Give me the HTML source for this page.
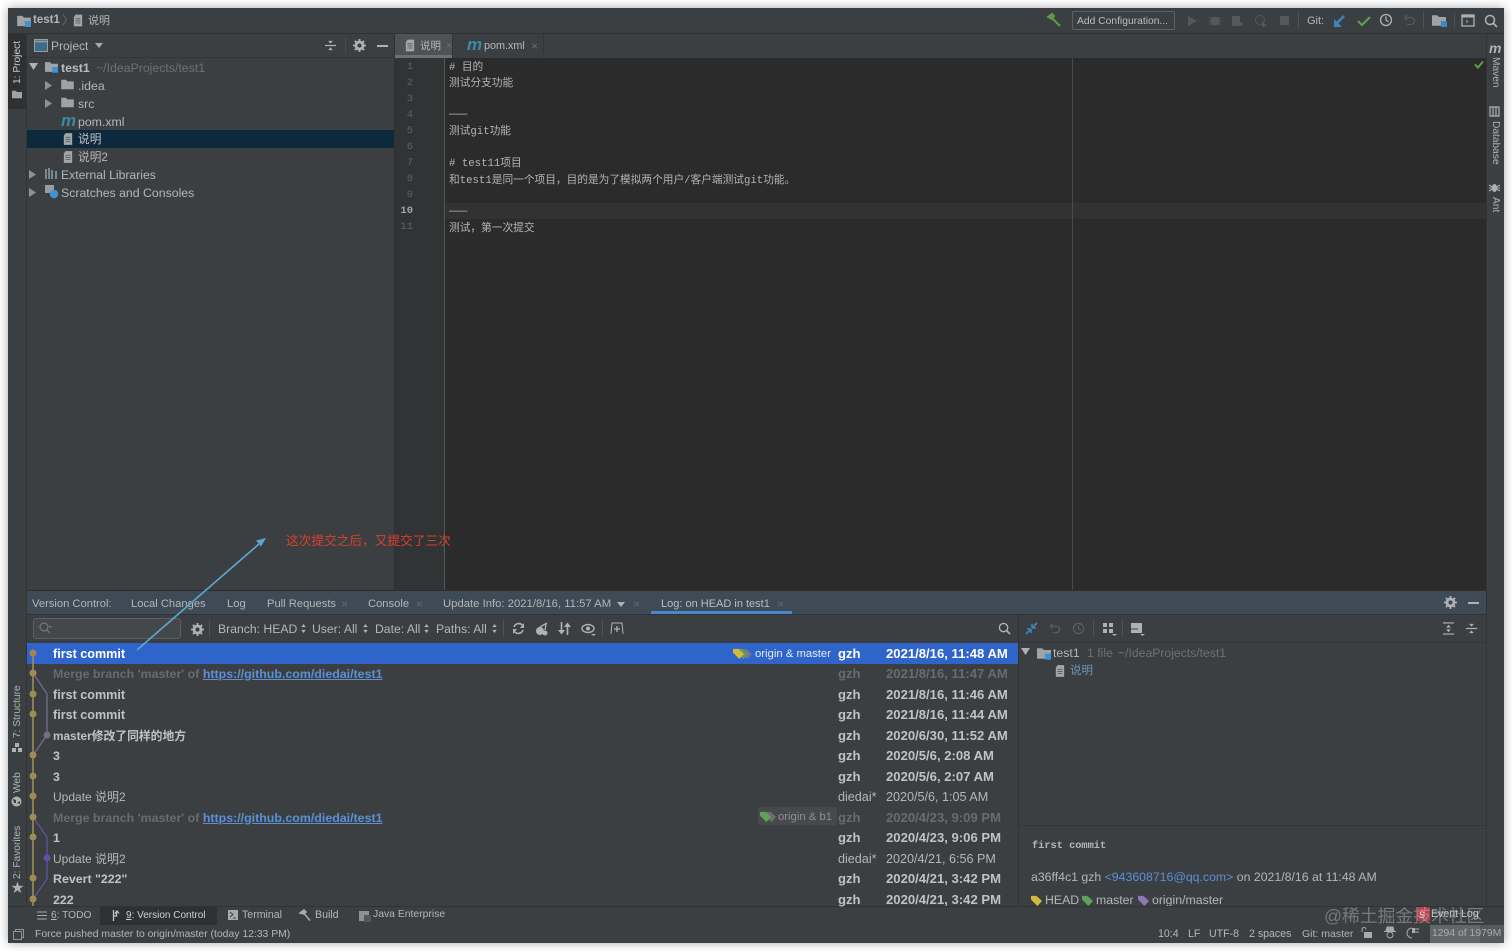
<!DOCTYPE html>
<html><head><meta charset="utf-8"><title>test1</title>
<style>
html,body{margin:0;padding:0;width:1512px;height:951px;overflow:hidden;background:#fff}
body{position:relative;font-family:"Liberation Sans","Noto Sans CJK SC",sans-serif;color:#b4b6b8;font-size:12px}
.b{position:absolute}
.t{position:absolute;white-space:nowrap;line-height:16px;font-size:12px;color:#b4b6b8}
.bd{font-weight:bold;font-size:12.4px;color:#c0c2c4}
.dt{font-size:13.1px}
.r{font-size:12.6px;color:#b4b6b8}
.dim{color:#6a6c6e}
.link{color:#5b8fd6;text-decoration:underline}
.m{font-family:"Liberation Mono","Noto Sans CJK SC",monospace;font-size:10.7px;color:#b2b4b6}
.n{font-family:"Liberation Mono",monospace;font-size:10.5px;color:#5f6264;text-align:right;width:20px}
.v{position:absolute;white-space:nowrap;font-size:10.2px;line-height:14px;color:#b0b2b4;transform-origin:0 0}
.mi{font-style:italic;font-weight:bold;color:#3d8aa6}
svg.i{position:absolute;overflow:visible}
#win{position:absolute;left:8px;top:8px;width:1496px;height:935px;box-shadow:0 0 9px rgba(0,0,0,.35);filter:blur(.3px)}
#rows{position:absolute;left:0;top:.5px;width:1496px;height:0}
</style></head><body>
<svg width="0" height="0" style="position:absolute"><defs>
<symbol id="folder" viewBox="0 0 16 14"><path d="M0 1h6l2 2h8v10H0z" fill="#9fa3a6"/></symbol>
<symbol id="mod" viewBox="0 0 16 14"><path d="M0 1h6l2 2h8v10H0z" fill="#9fa3a6"/><rect x="9" y="7" width="7" height="7" fill="#3f92d6"/></symbol>
<symbol id="file" viewBox="0 0 12 14"><path d="M3 0h8v14H1V3z" fill="#a3a6a8"/><path d="M3 5h6M3 7.500h6M3 10h6" stroke="#55585a" stroke-width="1"/></symbol>
<symbol id="gear" viewBox="0 0 14 14"><circle cx="7" cy="7" r="3.800" fill="none" stroke="#afb1b3" stroke-width="3"/><path d="M7 0v14M0 7h14M2 2l10 10M12 2L2 12" stroke="#afb1b3" stroke-width="2" stroke-dasharray="2.500 9"/></symbol>
<symbol id="collapse" viewBox="0 0 14 14"><path d="M1 7h12" stroke="#afb1b3" stroke-width="1.300"/><path d="M7 5L4.500 2h5zM7 9l-2.500 3h5z" fill="#afb1b3"/></symbol>
<symbol id="tag" viewBox="0 0 12 12"><path d="M0 1h6l6 5.500L7 12 0 5z"/></symbol>
<symbol id="updn" viewBox="0 0 5 10"><path d="M2.500 0L5 3.500H0zM2.500 10L0 6.500h5z" fill="#afb1b3"/></symbol>
</defs></svg>

<div id="win">
<!-- base -->
<div class="b" style="left:0;top:0;width:1496px;height:935px;background:#3c3f41"></div>
<div class="b" style="left:0;top:25px;width:1496px;height:1px;background:#303234"></div>
<div class="b" style="left:18px;top:26px;width:1px;height:872px;background:#323436"></div>
<div class="b" style="left:0;top:26px;width:18px;height:75px;background:#2e3032"></div>
<div class="b" style="left:19px;top:49px;width:367px;height:1px;background:#333537"></div>
<div class="b" style="left:19px;top:122px;width:367px;height:18px;background:#0d293e"></div>
<!-- editor -->
<div class="b" style="left:387px;top:26px;width:1091px;height:24px;background:#3c3f41"></div>
<div class="b" style="left:387px;top:26px;width:57px;height:24px;background:#4e5254"></div>
<div class="b" style="left:387px;top:47px;width:57px;height:3px;background:#6e7173"></div>
<div class="b" style="left:444px;top:26px;width:1px;height:24px;background:#323436"></div>
<div class="b" style="left:535px;top:26px;width:1px;height:24px;background:#323436"></div>
<div class="b" style="left:387px;top:50px;width:50px;height:533px;background:#313335"></div>
<div class="b" style="left:436px;top:50px;width:1px;height:533px;background:#555759"></div>
<div class="b" style="left:437px;top:50px;width:1041px;height:533px;background:#2b2b2b"></div>
<div class="b" style="left:437px;top:195px;width:1041px;height:16px;background:#323232"></div>
<div class="b" style="left:1064px;top:50px;width:1px;height:533px;background:#484a4c"></div>
<div class="b" style="left:386px;top:26px;width:1px;height:557px;background:#2f3133"></div>
<div class="b" style="left:1478px;top:26px;width:18px;height:872px;background:#3c3f41;border-left:1px solid #323436;box-sizing:border-box"></div>
<!-- bottom tabs -->
<div class="b" style="left:19px;top:582px;width:1459px;height:1px;background:#2b2d2f"></div>
<div class="b" style="left:19px;top:583px;width:1459px;height:23px;background:#3e4a56"></div>
<div class="b" style="left:19px;top:606px;width:1459px;height:1px;background:#303234"></div>
<div class="b" style="left:643px;top:603px;width:141px;height:3px;background:#4a88c7"></div>
<!-- log toolbar -->
<div class="b" style="left:25px;top:610px;width:148px;height:21px;background:#45484a;border:1px solid #5c5f61;border-radius:3px;box-sizing:border-box"></div>
<div class="b" style="left:19px;top:635px;width:991px;height:21px;background:#2f65ca"></div>
<div class="b" style="left:1010px;top:607px;width:1px;height:291px;background:#323436"></div>
<div class="b" style="left:1011px;top:634px;width:467px;height:1px;background:#343638"></div>
<div class="b" style="left:1011px;top:817px;width:467px;height:1px;background:#333537"></div>
<div class="b" style="left:750px;top:799px;width:79px;height:18px;background:#47494b;border-radius:2px"></div>
<!-- bottom bars -->
<div class="b" style="left:0;top:898px;width:1496px;height:1px;background:#303234"></div>
<div class="b" style="left:0;top:899px;width:1496px;height:36px;background:#3c3f41"></div>
<div class="b" style="left:92px;top:899px;width:117px;height:18px;background:#2e3032"></div>
<div class="b" style="left:1422px;top:917px;width:74px;height:18px;background:#56595b"></div>
<div class="b" style="left:1422px;top:917px;width:50px;height:18px;background:#636668"></div>

<!-- Title text -->
<svg class="i" style="left:9px;top:7px" width="14" height="12"><use href="#mod"/></svg>
<span class="t" style="left:25px;top:4px;font-weight:bold;font-size:11.500px">test1</span>
<span class="t dim" style="left:54px;top:4px">〉</span>
<svg class="i" style="left:65px;top:6px" width="10" height="13"><use href="#file"/></svg>
<span class="t" style="left:80px;top:5px;font-size:11px">说明</span>

<!-- Top right toolbar -->
<svg class="i" style="left:1039px;top:5px" width="14" height="14" viewBox="0 0 14 14"><path d="M1 4L5 1l2 2 -2 3zM5 5l8 8" stroke="#5d9b47" stroke-width="2" fill="#5d9b47"/></svg>
<div class="b" style="left:1064px;top:3px;width:103px;height:19px;border:1px solid #5e6163;border-radius:2px;box-sizing:border-box"></div>
<span class="t" style="left:1069px;top:6px;font-size:10.300px;color:#bcbec0">Add Configuration...</span>
<svg class="i" style="left:1179px;top:6px" width="100" height="14" viewBox="0 0 100 14"><path d="M1 2l9 5-9 5z" fill="#55585a"/><circle cx="28" cy="7" r="4.500" fill="#55585a"/><path d="M22 4h12M22 7h12M22 10h12" stroke="#55585a"/><path d="M45 2h8v10h-8zM52 7l5 3-5 3z" fill="#55585a"/><circle cx="73" cy="6" r="4.500" fill="none" stroke="#55585a"/><path d="M75 7l5 5-5 1z" fill="#55585a"/><rect x="93" y="2" width="9" height="9" fill="#55585a"/></svg>
<div class="b" style="left:1290px;top:4px;width:1px;height:17px;background:#505355"></div>
<span class="t" style="left:1299px;top:5px;font-size:11px">Git:</span>
<svg class="i" style="left:1325px;top:6px" width="14" height="14" viewBox="0 0 14 14"><path d="M11 2L3 10" stroke="#3d84b8" stroke-width="2.500"/><path d="M1 5v8h8z" fill="#3d84b8"/></svg>
<svg class="i" style="left:1349px;top:6px" width="14" height="14" viewBox="0 0 14 14"><path d="M1 7l4 4 8-8" stroke="#59a145" stroke-width="2.200" fill="none"/></svg>
<svg class="i" style="left:1371px;top:5px" width="14" height="14" viewBox="0 0 14 14"><circle cx="7" cy="7" r="5.500" fill="none" stroke="#afb1b3" stroke-width="1.300"/><path d="M7 3.500V7l2.500 2" stroke="#afb1b3" stroke-width="1.300" fill="none"/></svg>
<svg class="i" style="left:1395px;top:5px" width="14" height="14" viewBox="0 0 14 14"><path d="M4 2L1.500 4.500 4 7M2 4.500h6a3.500 3.500 0 0 1 0 7H4" stroke="#55585a" stroke-width="1.300" fill="none"/></svg>
<div class="b" style="left:1415px;top:4px;width:1px;height:17px;background:#505355"></div>
<svg class="i" style="left:1424px;top:6px" width="14" height="13"><use href="#folder"/></svg>
<div class="b" style="left:1433px;top:13px;width:6px;height:6px;background:#3f86c4"></div>
<div class="b" style="left:1446px;top:5px;width:1px;height:15px;background:#505355"></div>
<svg class="i" style="left:1453px;top:6px" width="14" height="13" viewBox="0 0 14 13"><rect x="1" y="1" width="12" height="11" fill="none" stroke="#afb1b3" stroke-width="1.300"/><path d="M1 2.500h12" stroke="#afb1b3" stroke-width="2"/><path d="M5 5.500l3 2-3 2z" fill="#5d9b47"/></svg>
<svg class="i" style="left:1476px;top:6px" width="14" height="14" viewBox="0 0 14 14"><circle cx="6" cy="6" r="4.500" fill="none" stroke="#afb1b3" stroke-width="1.500"/><path d="M9.500 9.500L13 13" stroke="#afb1b3" stroke-width="1.800"/></svg>

<!-- Left stripe labels -->
<span class="v" style="left:3px;top:76px;transform:rotate(-90deg);color:#c8cacc">1: Project</span>
<svg class="i" style="left:4px;top:82px" width="10" height="9"><use href="#folder"/></svg>
<span class="v" style="left:3px;top:730px;transform:rotate(-90deg)">7: Structure</span>
<svg class="i" style="left:4px;top:735px" width="10" height="9" viewBox="0 0 10 9"><path d="M3 0h4v4H3zM0 5h4v4H0zM6 5h4v4H6z" fill="#afb1b3"/></svg>
<span class="v" style="left:3px;top:785px;transform:rotate(-90deg)">Web</span>
<svg class="i" style="left:3px;top:788px" width="11" height="11" viewBox="0 0 11 11"><circle cx="5.500" cy="5.500" r="5" fill="#afb1b3"/><path d="M2 3l3 1 0 3-2 0zM6 7l3-2 0 3z" fill="#3c3f41"/></svg>
<span class="v" style="left:3px;top:871px;transform:rotate(-90deg)">2: Favorites</span>
<div class="b" style="left:3px;top:873px;font-size:13px;line-height:14px;color:#afb1b3">★</div>
<!-- Right stripe labels -->
<span class="t mi" style="left:1481px;top:32px;font-size:14px;color:#b0b2b4">m</span>
<span class="v" style="left:1494px;top:49px;transform:rotate(90deg)">Maven</span>
<svg class="i" style="left:1481px;top:98px" width="11" height="11" viewBox="0 0 11 11"><path d="M1 1h9v9H1zM4 1v9M7 1v9" fill="none" stroke="#afb1b3" stroke-width="1.200"/></svg>
<span class="v" style="left:1494px;top:113px;transform:rotate(90deg)">Database</span>
<svg class="i" style="left:1481px;top:174px" width="11" height="11" viewBox="0 0 11 11"><ellipse cx="5.500" cy="6" rx="2.500" ry="4" fill="#afb1b3"/><path d="M0 3l11 6M11 3L0 9M0 6h11" stroke="#afb1b3"/></svg>
<span class="v" style="left:1494px;top:189px;transform:rotate(90deg)">Ant</span>

<!-- Project header -->
<svg class="i" style="left:26px;top:31px" width="14" height="13" viewBox="0 0 14 13"><rect x=".5" y=".5" width="13" height="12" fill="#3d6b8c" stroke="#9a9da0"/><path d="M0 2.500h14" stroke="#9a9da0" stroke-width="1.500"/></svg>
<span class="t" style="left:43px;top:30px">Project</span>
<svg class="i" style="left:87px;top:35px" width="9" height="6"><path d="M0 0h8L4 5z" fill="#a8aaac"/></svg>
<svg class="i" style="left:316px;top:31px" width="13" height="13"><use href="#collapse"/></svg>
<div class="b" style="left:337px;top:29px;width:1px;height:17px;background:#484b4d"></div>
<svg class="i" style="left:345px;top:31px" width="13" height="13"><use href="#gear"/></svg>
<div class="b" style="left:369px;top:37px;width:11px;height:2px;background:#afb1b3"></div>

<!-- Project tree -->
<svg class="i" style="left:21px;top:55px" width="9" height="8"><path d="M0 0h9L4.500 7z" fill="#afb1b3"/></svg>
<svg class="i" style="left:37px;top:53px" width="13" height="12"><use href="#mod"/></svg>
<span class="t" style="left:53px;top:52px;font-weight:bold;font-size:12.300px;color:#bbbdbf">test1</span>
<span class="t" style="left:88px;top:52px;color:#6e7072;font-size:12.300px">~/IdeaProjects/test1</span>
<svg class="i" style="left:37px;top:73px" width="7" height="9"><path d="M0 0l7 4.500L0 9z" fill="#8f9193"/></svg>
<svg class="i" style="left:53px;top:71px" width="13" height="11"><use href="#folder"/></svg>
<span class="t" style="left:70px;top:70px;font-size:12.300px">.idea</span>
<svg class="i" style="left:37px;top:91px" width="7" height="9"><path d="M0 0l7 4.500L0 9z" fill="#8f9193"/></svg>
<svg class="i" style="left:53px;top:89px" width="13" height="11"><use href="#folder"/></svg>
<span class="t" style="left:70px;top:88px;font-size:12.300px">src</span>
<span class="t mi" style="left:53px;top:105px;font-size:17px">m</span>
<span class="t" style="left:70px;top:106px;font-size:12.300px">pom.xml</span>
<svg class="i" style="left:55px;top:125px" width="10" height="12"><use href="#file"/></svg>
<span class="t" style="left:70px;top:124px;color:#c2c4c6;font-size:11.700px">说明</span>
<svg class="i" style="left:55px;top:143px" width="10" height="12"><use href="#file"/></svg>
<span class="t" style="left:70px;top:142px;font-size:11.700px">说明2</span>
<svg class="i" style="left:21px;top:162px" width="7" height="9"><path d="M0 0l7 4.500L0 9z" fill="#8f9193"/></svg>
<svg class="i" style="left:37px;top:160px" width="13" height="11" viewBox="0 0 13 11"><path d="M1 1v10M4 0v11M7 2v9M11 3v8" stroke="#8a9ba5" stroke-width="1.600"/></svg>
<span class="t" style="left:53px;top:159px;font-size:12.200px">External Libraries</span>
<svg class="i" style="left:21px;top:180px" width="7" height="9"><path d="M0 0l7 4.500L0 9z" fill="#8f9193"/></svg>
<svg class="i" style="left:37px;top:177px" width="14" height="14" viewBox="0 0 14 14"><rect x="0" y="0" width="9" height="8" fill="#9a9da0"/><circle cx="9" cy="9" r="4.300" fill="#3f92d6"/></svg>
<span class="t" style="left:53px;top:177px;font-size:12.300px">Scratches and Consoles</span>

<!-- Editor tabs -->
<svg class="i" style="left:397px;top:31px" width="10" height="13"><use href="#file"/></svg>
<span class="t" style="left:412px;top:30px;font-size:10.500px">说明</span>
<span class="t dim" style="left:438px;top:30px;font-size:11px">×</span>
<span class="t mi" style="left:459px;top:29px;font-size:17px">m</span>
<span class="t" style="left:476px;top:30px;font-size:10.800px">pom.xml</span>
<span class="t dim" style="left:523px;top:30px;font-size:12px">×</span>

<!-- Line numbers -->
<span class="t n" style="left:385px;top:51px">1</span>
<span class="t n" style="left:385px;top:67px">2</span>
<span class="t n" style="left:385px;top:83px">3</span>
<span class="t n" style="left:385px;top:99px">4</span>
<span class="t n" style="left:385px;top:115px">5</span>
<span class="t n" style="left:385px;top:131px">6</span>
<span class="t n" style="left:385px;top:147px">7</span>
<span class="t n" style="left:385px;top:163px">8</span>
<span class="t n" style="left:385px;top:179px">9</span>
<span class="t n" style="left:385px;top:195px;color:#a4a6a8;font-weight:bold">10</span>
<span class="t n" style="left:385px;top:211px">11</span>

<!-- Editor text -->
<span class="t m" style="left:441px;top:52px"># 目的</span>
<span class="t m" style="left:441px;top:68px">测试分支功能</span>
<span class="t m" style="left:441px;top:99px;letter-spacing:-.5px">———</span>
<span class="t m" style="left:441px;top:116px">测试git功能</span>
<span class="t m" style="left:441px;top:148px"># test11项目</span>
<span class="t m" style="left:441px;top:165px">和test1是同一个项目，目的是为了模拟两个用户/客户端测试git功能。</span>
<span class="t m" style="left:441px;top:196px;letter-spacing:-.5px">———</span>
<span class="t m" style="left:441px;top:213px">测试，第一次提交</span>
<svg class="i" style="left:1466px;top:52px" width="10" height="9" viewBox="0 0 10 9"><path d="M1 4.500l3 3 5-6" stroke="#59a145" stroke-width="2" fill="none"/></svg>

<!-- Bottom tabs text -->
<span class="t" style="left:24px;top:588px;font-size:11.200px">Version Control:</span>
<span class="t" style="left:123px;top:588px;font-size:11.200px">Local Changes</span>
<span class="t" style="left:219px;top:588px;font-size:11.200px">Log</span>
<span class="t" style="left:259px;top:588px;font-size:11.200px">Pull Requests</span>
<span class="t" style="left:333px;top:588px;color:#5f6a74">×</span>
<span class="t" style="left:360px;top:588px;font-size:11.200px">Console</span>
<span class="t" style="left:408px;top:588px;color:#5f6a74">×</span>
<span class="t" style="left:435px;top:588px;font-size:11.300px">Update Info: 2021/8/16, 11:57 AM</span>
<svg class="i" style="left:609px;top:594px" width="8" height="5"><path d="M0 0h8L4 5z" fill="#afb1b3"/></svg>
<span class="t" style="left:625px;top:588px;color:#5f6a74">×</span>
<span class="t" style="left:653px;top:588px;font-size:11px;color:#bcbec0">Log: on HEAD in test1</span>
<span class="t" style="left:769px;top:588px;color:#5f6a74">×</span>
<svg class="i" style="left:1436px;top:588px" width="13" height="13"><use href="#gear"/></svg>
<div class="b" style="left:1460px;top:594px;width:11px;height:2px;background:#afb1b3"></div>

<!-- Log toolbar -->
<svg class="i" style="left:31px;top:614px" width="13" height="12" viewBox="0 0 13 12"><circle cx="5" cy="5" r="4" fill="none" stroke="#7e8183"/><path d="M8 8l3 3" stroke="#7e8183"/><path d="M10 4h3l-1.500 2z" fill="#7e8183"/></svg>
<svg class="i" style="left:183px;top:615px" width="13" height="13"><use href="#gear"/></svg>
<div class="b" style="left:201px;top:612px;width:1px;height:17px;background:#505355"></div>
<span class="t" style="left:210px;top:613px;font-size:12.200px">Branch: HEAD</span>
<svg class="i" style="left:293px;top:616px" width="5" height="9"><use href="#updn"/></svg>
<span class="t" style="left:304px;top:613px;font-size:12.200px">User: All</span>
<svg class="i" style="left:355px;top:616px" width="5" height="9"><use href="#updn"/></svg>
<span class="t" style="left:367px;top:613px;font-size:12.200px">Date: All</span>
<svg class="i" style="left:416px;top:616px" width="5" height="9"><use href="#updn"/></svg>
<span class="t" style="left:428px;top:613px;font-size:12.200px">Paths: All</span>
<svg class="i" style="left:484px;top:616px" width="5" height="9"><use href="#updn"/></svg>
<div class="b" style="left:495px;top:612px;width:1px;height:17px;background:#505355"></div>
<svg class="i" style="left:504px;top:614px" width="13" height="13" viewBox="0 0 13 13"><path d="M2 5a5 5 0 0 1 9-1M11 8a5 5 0 0 1-9 1" fill="none" stroke="#afb1b3" stroke-width="1.600"/><path d="M12 1v5H8zM1 12V7h4z" fill="#afb1b3"/></svg>
<svg class="i" style="left:527px;top:614px" width="13" height="14" viewBox="0 0 13 14"><circle cx="5" cy="9" r="4" fill="#afb1b3"/><circle cx="10" cy="11" r="2.500" fill="#afb1b3"/><path d="M5 5l7-4M10 8l1-6" stroke="#afb1b3" stroke-width="1.300"/></svg>
<svg class="i" style="left:550px;top:614px" width="13" height="13" viewBox="0 0 13 13"><path d="M3.500 0v9M9.500 4v9" stroke="#afb1b3" stroke-width="1.600"/><path d="M0 8h7l-3.500 4.500zM6 5h7L9.500.5z" fill="#afb1b3"/></svg>
<svg class="i" style="left:573px;top:615px" width="15" height="13" viewBox="0 0 15 13"><ellipse cx="7" cy="5.500" rx="6" ry="4" fill="none" stroke="#afb1b3" stroke-width="1.400"/><circle cx="7" cy="5.500" r="2" fill="#afb1b3"/><path d="M10 11h5l-2.500 2z" fill="#afb1b3"/></svg>
<div class="b" style="left:594px;top:612px;width:1px;height:17px;background:#505355"></div>
<svg class="i" style="left:602px;top:614px" width="14" height="13" viewBox="0 0 14 13"><path d="M1 12L2 1h10l1 11" fill="none" stroke="#afb1b3"/><path d="M7 4v6M4 7h6" stroke="#afb1b3" stroke-width="1.300"/></svg>
<svg class="i" style="left:990px;top:614px" width="13" height="13" viewBox="0 0 14 14"><circle cx="6" cy="6" r="4.500" fill="none" stroke="#afb1b3" stroke-width="1.500"/><path d="M9.500 9.500L13 13" stroke="#afb1b3" stroke-width="1.800"/></svg>
<!-- detail toolbar -->
<svg class="i" style="left:1017px;top:614px" width="13" height="13" viewBox="0 0 13 13"><path d="M1 12l5-5M12 1L7 6" stroke="#3d84b8" stroke-width="1.800"/><path d="M6 7H2M6 7v4M7 6h4M7 6V2" stroke="#3d84b8" stroke-width="1.600"/></svg>
<svg class="i" style="left:1041px;top:614px" width="13" height="13" viewBox="0 0 14 14"><path d="M4 2L1.500 4.500 4 7M2 4.500h6a3.500 3.500 0 0 1 0 7H4" stroke="#5b5e60" stroke-width="1.300" fill="none"/></svg>
<svg class="i" style="left:1064px;top:614px" width="13" height="13" viewBox="0 0 14 14"><circle cx="7" cy="7" r="5.500" fill="none" stroke="#5b5e60" stroke-width="1.300"/><path d="M7 3.500V7l2.500 2" stroke="#5b5e60" stroke-width="1.300" fill="none"/></svg>
<div class="b" style="left:1085px;top:612px;width:1px;height:17px;background:#505355"></div>
<svg class="i" style="left:1095px;top:615px" width="14" height="13" viewBox="0 0 14 13"><path d="M0 0h4v4H0zM6 0h4v4H6zM0 6h4v4H0zM6 6h4v4H6z" fill="#afb1b3"/><path d="M9 11h5l-2.500 2z" fill="#afb1b3"/></svg>
<div class="b" style="left:1114px;top:612px;width:1px;height:17px;background:#505355"></div>
<svg class="i" style="left:1123px;top:615px" width="14" height="13" viewBox="0 0 14 13"><path d="M0 0h11v10H0z" fill="#afb1b3"/><path d="M0 6h7" stroke="#3c3f41"/><path d="M9 11h5l-2.500 2z" fill="#afb1b3"/></svg>
<svg class="i" style="left:1434px;top:614px" width="13" height="13" viewBox="0 0 14 14"><path d="M1 1h12M1 13h12" stroke="#afb1b3" stroke-width="1.300"/><path d="M7 3L4.500 6h5zM7 11L4.500 8h5z" fill="#afb1b3"/></svg>
<svg class="i" style="left:1457px;top:614px" width="13" height="13"><use href="#collapse"/></svg>

<!-- Graph -->
<svg class="i" style="left:19px;top:635px" width="40" height="263" viewBox="0 0 40 263">
<path d="M6 10V263" stroke="#a08b55" stroke-width="1.600" fill="none"/>
<path d="M6 30L20 51V92L6 112" stroke="#6f6d8c" stroke-width="1.300" fill="none"/>
<path d="M6 174L20 194V236L6 256" stroke="#5d52a6" stroke-width="1.300" fill="none"/>
<g fill="#a08b55"><circle cx="6" cy="10" r="3.500" fill="#a8854f"/><circle cx="6" cy="30" r="3.500"/><circle cx="6" cy="51" r="3.500"/><circle cx="6" cy="71" r="3.500"/><circle cx="6" cy="112" r="3.500"/><circle cx="6" cy="133" r="3.500"/><circle cx="6" cy="153" r="3.500"/><circle cx="6" cy="174" r="3.500"/><circle cx="6" cy="194" r="3.500"/><circle cx="6" cy="235" r="3.500"/><circle cx="6" cy="256" r="3.500"/></g>
<circle cx="20" cy="92" r="3.500" fill="#6f6d8c"/><circle cx="20" cy="215" r="3.500" fill="#5d52a6"/>
</svg>

<!-- Log rows -->
<div id="rows">
<span class="t bd" style="left:45px;top:637px;color:#fff;font-size:12.600px">first commit</span>
<span class="t bd" style="left:45px;top:657px;color:#696b6d">Merge branch 'master' of <span class="link">https://github.com/diedai/test1</span></span>
<span class="t bd" style="left:45px;top:678px;font-size:12.600px">first commit</span>
<span class="t bd" style="left:45px;top:698px;font-size:12.600px">first commit</span>
<span class="t bd" style="left:45px;top:719px;font-size:11.800px">master修改了同样的地方</span>
<span class="t bd" style="left:45px;top:739px">3</span>
<span class="t bd" style="left:45px;top:760px">3</span>
<span class="t r" style="left:45px;top:780px;font-size:12px">Update 说明2</span>
<span class="t bd" style="left:45px;top:801px;color:#696b6d">Merge branch 'master' of <span class="link">https://github.com/diedai/test1</span></span>
<span class="t bd" style="left:45px;top:821px">1</span>
<span class="t r" style="left:45px;top:842px;font-size:12px">Update 说明2</span>
<span class="t bd" style="left:45px;top:862px">Revert "222"</span>
<span class="t bd" style="left:45px;top:883px;height:15px;overflow:hidden">222</span>

<svg class="i" style="left:733px;top:639px;fill:#7c6f9c" width="11" height="11"><use href="#tag"/></svg>
<svg class="i" style="left:729px;top:639px;fill:#5f9e58" width="11" height="11"><use href="#tag"/></svg>
<svg class="i" style="left:725px;top:639px;fill:#d3b93f" width="11" height="11"><use href="#tag"/></svg>
<span class="t" style="left:747px;top:637px;color:#e8ebf2;font-size:11.300px">origin &amp; master</span>
<svg class="i" style="left:757px;top:802px;fill:#6c6f71" width="11" height="11"><use href="#tag"/></svg>
<svg class="i" style="left:752px;top:802px;fill:#5fa05a" width="11" height="11"><use href="#tag"/></svg>
<span class="t" style="left:770px;top:800px;color:#8d8f91;font-size:11.300px">origin &amp; b1</span>

<span class="t bd dt" style="left:830px;top:637px;color:#fff">gzh</span>
<span class="t bd dt" style="left:830px;top:657px;color:#696b6d">gzh</span>
<span class="t bd dt" style="left:830px;top:678px">gzh</span>
<span class="t bd dt" style="left:830px;top:698px">gzh</span>
<span class="t bd dt" style="left:830px;top:719px">gzh</span>
<span class="t bd dt" style="left:830px;top:739px">gzh</span>
<span class="t bd dt" style="left:830px;top:760px">gzh</span>
<span class="t r" style="left:830px;top:780px">diedai*</span>
<span class="t bd dt" style="left:830px;top:801px;color:#696b6d">gzh</span>
<span class="t bd dt" style="left:830px;top:821px">gzh</span>
<span class="t r" style="left:830px;top:842px">diedai*</span>
<span class="t bd dt" style="left:830px;top:862px">gzh</span>
<span class="t bd dt" style="left:830px;top:883px;height:15px;overflow:hidden">gzh</span>

<span class="t bd dt" style="left:878px;top:637px;color:#fff">2021/8/16, 11:48 AM</span>
<span class="t bd dt" style="left:878px;top:657px;color:#696b6d">2021/8/16, 11:47 AM</span>
<span class="t bd dt" style="left:878px;top:678px">2021/8/16, 11:46 AM</span>
<span class="t bd dt" style="left:878px;top:698px">2021/8/16, 11:44 AM</span>
<span class="t bd dt" style="left:878px;top:719px">2020/6/30, 11:52 AM</span>
<span class="t bd dt" style="left:878px;top:739px">2020/5/6, 2:08 AM</span>
<span class="t bd dt" style="left:878px;top:760px">2020/5/6, 2:07 AM</span>
<span class="t r" style="left:878px;top:780px">2020/5/6, 1:05 AM</span>
<span class="t bd dt" style="left:878px;top:801px;color:#696b6d">2020/4/23, 9:09 PM</span>
<span class="t bd dt" style="left:878px;top:821px">2020/4/23, 9:06 PM</span>
<span class="t r" style="left:878px;top:842px">2020/4/21, 6:56 PM</span>
<span class="t bd dt" style="left:878px;top:862px">2020/4/21, 3:42 PM</span>
<span class="t bd dt" style="left:878px;top:883px;height:15px;overflow:hidden">2020/4/21, 3:42 PM</span>
</div>

<!-- Changed files -->
<svg class="i" style="left:1013px;top:640px" width="9" height="8"><path d="M0 0h9L4.500 7z" fill="#afb1b3"/></svg>
<svg class="i" style="left:1029px;top:639px" width="14" height="13"><use href="#mod"/></svg>
<span class="t" style="left:1045px;top:637px;font-size:12.300px">test1</span>
<span class="t" style="left:1079px;top:637px;color:#6e7072;font-size:12.300px">1 file</span>
<span class="t" style="left:1110px;top:637px;color:#6e7072;font-size:12.200px">~/IdeaProjects/test1</span>
<svg class="i" style="left:1047px;top:657px" width="10" height="12"><use href="#file"/></svg>
<span class="t" style="left:1062px;top:655px;color:#6897bb;font-size:11.500px">说明</span>

<!-- Commit details -->
<span class="t" style="left:1024px;top:830px;font-family:'Liberation Mono',monospace;font-weight:bold;font-size:10.300px">first commit</span>
<span class="t" style="left:1023px;top:861px;font-size:12.300px">a36ff4c1 gzh <span style="color:#5b8fd6">&lt;943608716@qq.com&gt;</span> on 2021/8/16 at 11:48 AM</span>
<svg class="i" style="left:1023px;top:887px;fill:#d3b93f" width="11" height="11"><use href="#tag"/></svg>
<span class="t" style="left:1037px;top:884px;font-size:12.300px;height:14px;overflow:hidden">HEAD</span>
<svg class="i" style="left:1074px;top:887px;fill:#5fa05a" width="11" height="11"><use href="#tag"/></svg>
<span class="t" style="left:1088px;top:884px;font-size:12.300px;height:14px;overflow:hidden">master</span>
<svg class="i" style="left:1130px;top:887px;fill:#8d78b0" width="11" height="11"><use href="#tag"/></svg>
<span class="t" style="left:1144px;top:884px;font-size:12.300px;height:14px;overflow:hidden">origin/master</span>

<!-- Tool windows bar -->
<svg class="i" style="left:29px;top:903px" width="10" height="9" viewBox="0 0 10 9"><path d="M0 1h10M0 4.500h10M0 8h10" stroke="#a8aaac"/></svg>
<span class="t" style="left:43px;top:900px;font-size:10.200px"><u>6</u>: TODO</span>
<svg class="i" style="left:104px;top:902px" width="10" height="11" viewBox="0 0 10 11"><path d="M1.500 0v11M1.500 6h3V2M3 3.500L5 1l2 2.500" stroke="#c4c6c8" stroke-width="1.300" fill="none"/></svg>
<span class="t" style="left:118px;top:900px;font-size:10px;color:#cfd1d3"><u>9</u>: Version Control</span>
<svg class="i" style="left:220px;top:902px" width="10" height="10" viewBox="0 0 10 10"><rect width="10" height="10" fill="#a8aaac"/><path d="M2 2l3 2.500L2 7M5 8h3" stroke="#3c3f41" fill="none"/></svg>
<span class="t" style="left:234px;top:899px;font-size:10.600px">Terminal</span>
<svg class="i" style="left:292px;top:902px" width="11" height="11" viewBox="0 0 11 11"><path d="M0 3l4-3 2 2-2 2zM4 3.500l6 7" stroke="#a8aaac" stroke-width="1.600" fill="#a8aaac"/></svg>
<span class="t" style="left:307px;top:899px;font-size:10.600px">Build</span>
<svg class="i" style="left:351px;top:902px" width="12" height="12" viewBox="0 0 12 12"><rect y="1" width="10" height="10" fill="#8f9193"/><rect x="5" y="5" width="7" height="7" fill="#55585a"/></svg>
<span class="t" style="left:365px;top:899px;font-size:10.400px">Java Enterprise</span>
<!-- Status -->
<svg class="i" style="left:5px;top:921px" width="11" height="11" viewBox="0 0 11 11"><rect x="2.500" y=".5" width="8" height="8" fill="none" stroke="#8f9193"/><rect x=".5" y="2.500" width="8" height="8" fill="#3c3f41" stroke="#8f9193"/></svg>
<span class="t" style="left:27px;top:919px;font-size:10.400px">Force pushed master to origin/master (today 12:33 PM)</span>
<span class="t" style="left:1150px;top:918px;font-size:10.600px">10:4</span>
<span class="t" style="left:1180px;top:918px;font-size:10.600px">LF</span>
<span class="t" style="left:1201px;top:918px;font-size:10.600px">UTF-8</span>
<span class="t" style="left:1241px;top:918px;font-size:10.600px">2 spaces</span>
<span class="t" style="left:1294px;top:918px;font-size:10.500px">Git: master</span>
<svg class="i" style="left:1353px;top:919px" width="11" height="11" viewBox="0 0 11 11"><rect x="3" y="5" width="8" height="6" fill="#a8aaac"/><path d="M1 5V2.500a2 2 0 0 1 4 0" stroke="#a8aaac" fill="none"/></svg>
<svg class="i" style="left:1376px;top:919px" width="12" height="12" viewBox="0 0 12 12"><path d="M3 0h6l1 4H2zM0 4.500h12" stroke="#a8aaac" fill="#a8aaac"/><circle cx="6" cy="8" r="3" fill="none" stroke="#a8aaac"/></svg>
<svg class="i" style="left:1399px;top:919px" width="12" height="12" viewBox="0 0 12 12"><path d="M5 1a5 5 0 1 0 0 10" stroke="#a8aaac" fill="none"/><path d="M5 1h3v5H5z" fill="#a8aaac"/><path d="M8 2h4M8 5h4" stroke="#a8aaac"/></svg>
<span class="t" style="left:1424px;top:918px;font-size:10.400px;color:#a9abad">1294 of 1979M</span>

<!-- Event log -->
<div class="b" style="left:1409px;top:899px;width:13px;height:14px;background:#b8404a;border-radius:2px"></div>
<span class="t" style="left:1411px;top:899px;font-size:9px;color:#eee">S</span>
<span class="t" style="left:1423px;top:898px;font-size:10.600px;color:#c4c6c8">Event Log</span>
<!-- watermark -->
<span class="t" style="left:1316px;top:898px;font-size:17.800px;line-height:20px;color:rgba(200,200,200,.42)">@稀土掘金技术社区</span>

<!-- annotation -->
<svg class="i" style="left:0;top:0" width="300" height="660"><path d="M129 642L251 536" stroke="#5aa5cc" stroke-width="1.700"/><path d="M258 530l-10 2.500 5 6z" fill="#5aa5cc"/></svg>
<span class="t" style="left:278px;top:525px;font-size:12.700px;color:#dd3f2c">这次提交之后，又提交了三次</span>
</div>
</body></html>
